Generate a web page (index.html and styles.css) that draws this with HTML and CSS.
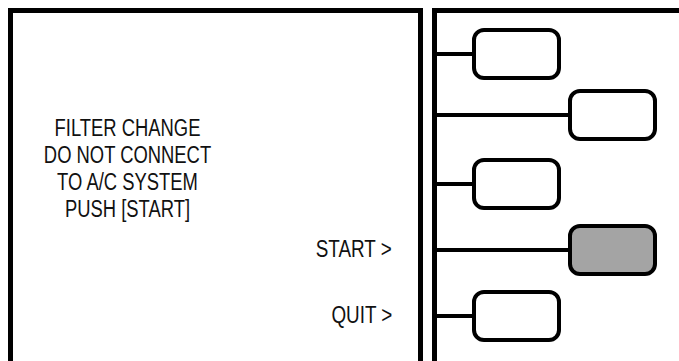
FILE: index.html
```html
<!DOCTYPE html>
<html lang="en">
<head>
  <meta charset="UTF-8">
  <meta name="viewport" content="width=device-width, initial-scale=1.0">
  <title>Filter Change</title>
  <link rel="stylesheet" href="styles.css">
</head>
<body>
  <div class="screen">
    <div class="display">
      <div class="message">
        FILTER CHANGE<br>
        DO NOT CONNECT<br>
        TO A/C SYSTEM<br>
        PUSH [START]
      </div>
      <div class="label label-start"><span>START &gt;</span></div>
      <div class="label label-quit"><span>QUIT &gt;</span></div>
    </div>

    <div class="keys">
      <div class="key-row row-1">
        <div class="wire short"></div>
        <div class="key"></div>
      </div>
      <div class="key-row row-2">
        <div class="wire long"></div>
        <div class="key"></div>
      </div>
      <div class="key-row row-3">
        <div class="wire short"></div>
        <div class="key"></div>
      </div>
      <div class="key-row row-4">
        <div class="wire long"></div>
        <div class="key pressed"></div>
      </div>
      <div class="key-row row-5">
        <div class="wire short"></div>
        <div class="key"></div>
      </div>
    </div>
  </div>
</body>
</html>
```

FILE: styles.css
```css
body {
  margin: 8px 0 0 8px;
  background: #fff;
  overflow: hidden;
  font-family: "Liberation Sans", Arial, sans-serif;
  color: #111;
}

.screen {
  display: flex;
  gap: 9px;
  height: calc(100vh - 8px);
}

.display {
  width: 415px;
  box-sizing: border-box;
  border: 5px solid #000;
  border-bottom: none;
  display: flex;
  flex-direction: column;
}

/* condensed look: no narrow face installed, so squeeze the text */
.message {
  width: 229px;
  margin-top: 102px;
  text-align: center;
  font-size: 23px;
  line-height: 27px;
  transform: scaleX(0.8);
}

.label {
  text-align: right;
  padding-right: 26px;
  font-size: 23px;
  line-height: 27px;
}

.label span {
  display: inline-block;
  transform: scaleX(0.82);
  transform-origin: right center;
}

.label-start {
  margin-top: 13px;
}

.label-quit {
  margin-top: 39px;
}

.keys {
  flex: 1;
  border-top: 5px solid #000;
  border-left: 5px solid #000;
  padding-top: 15px;
}

.key-row {
  display: flex;
  align-items: center;
}

.row-2 { margin-top: 9px; }
.row-3 { margin-top: 17px; }
.row-4 { margin-top: 14px; }
.row-5 { margin-top: 14px; }

.wire {
  height: 4px;
  background: #000;
}

.wire.short { width: 35px; }
.wire.long { width: 131px; }

.key {
  width: 89px;
  height: 52px;
  box-sizing: border-box;
  border: 4px solid #000;
  border-radius: 12px;
  background: #fff;
}

.key.pressed {
  background: #a4a4a4;
}
```
